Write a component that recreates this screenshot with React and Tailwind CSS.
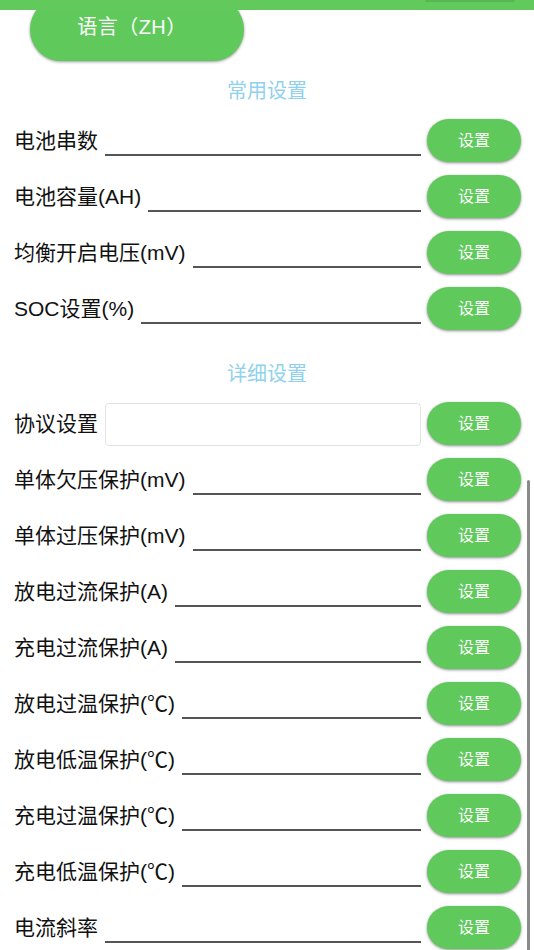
import React from 'react';

const common = ['电池串数', '电池容量(AH)', '均衡开启电压(mV)', 'SOC设置(%)'];
const detail = [
  '单体欠压保护(mV)',
  '单体过压保护(mV)',
  '放电过流保护(A)',
  '充电过流保护(A)',
  '放电过温保护(℃)',
  '放电低温保护(℃)',
  '充电过温保护(℃)',
  '充电低温保护(℃)',
  '电流斜率',
];

const SetButton = () => (
  <button className="w-[94px] h-[43px] shrink-0 rounded-full bg-[#5fc95b] text-white text-[16px] shadow-[0_1px_3px_rgba(0,0,0,0.45)] ml-[6px] -mt-[1px]">
    设置
  </button>
);

const Row = ({ label, boxed }) => (
  <div className="h-[56px] flex items-center pl-[14px] pr-[13px]">
    <span className="text-[21px] text-[#111] whitespace-nowrap">{label}</span>
    {boxed ? (
      <div className="flex-1 ml-[7px] h-[43px] border border-[#e3e3e3] rounded-[4px] bg-white" />
    ) : (
      <div className="flex-1 ml-[7px] h-[30px] border-b-2 border-[#555]" />
    )}
    <SetButton />
  </div>
);

const Title = ({ children, className }) => (
  <div className={`text-center text-[20px] leading-[26px] text-[#8fd1ee] ${className}`}>{children}</div>
);

export default function App() {
  return (
    <div
      className="relative w-[534px] h-[950px] overflow-hidden bg-white"
      style={{ fontFamily: '"Liberation Sans", "Noto Sans CJK SC", sans-serif' }}
    >
      {/* top bar */}
      <div className="relative z-10 h-[10px] bg-[#62c95c]">
        <div className="absolute left-[425px] top-0 w-[90px] h-[2px] rounded-b-full bg-[#58b653]" />
      </div>

      {/* language button */}
      <div className="-mt-[12px] ml-[30px] w-[214px] h-[63px] rounded-[31px] bg-[#5fc95b] shadow-[0_1px_3px_rgba(0,0,0,0.4)] flex items-start justify-center pt-[17px] pr-[10px]">
        <span className="text-white text-[20px] leading-[24px] tracking-[0.5px]">语言（ZH）</span>
      </div>

      <Title className="pt-[17px] pb-[9px]">常用设置</Title>
      {common.map((l) => (
        <Row key={l} label={l} />
      ))}

      <Title className="pt-[24px] pb-[9px]">详细设置</Title>
      <Row label="协议设置" boxed />
      {detail.map((l) => (
        <Row key={l} label={l} />
      ))}

      {/* scroll indicator */}
      <div className="absolute left-[527px] top-[480px] w-[3px] h-[480px] rounded-full bg-[#8a8a8a]" />
    </div>
  );
}
